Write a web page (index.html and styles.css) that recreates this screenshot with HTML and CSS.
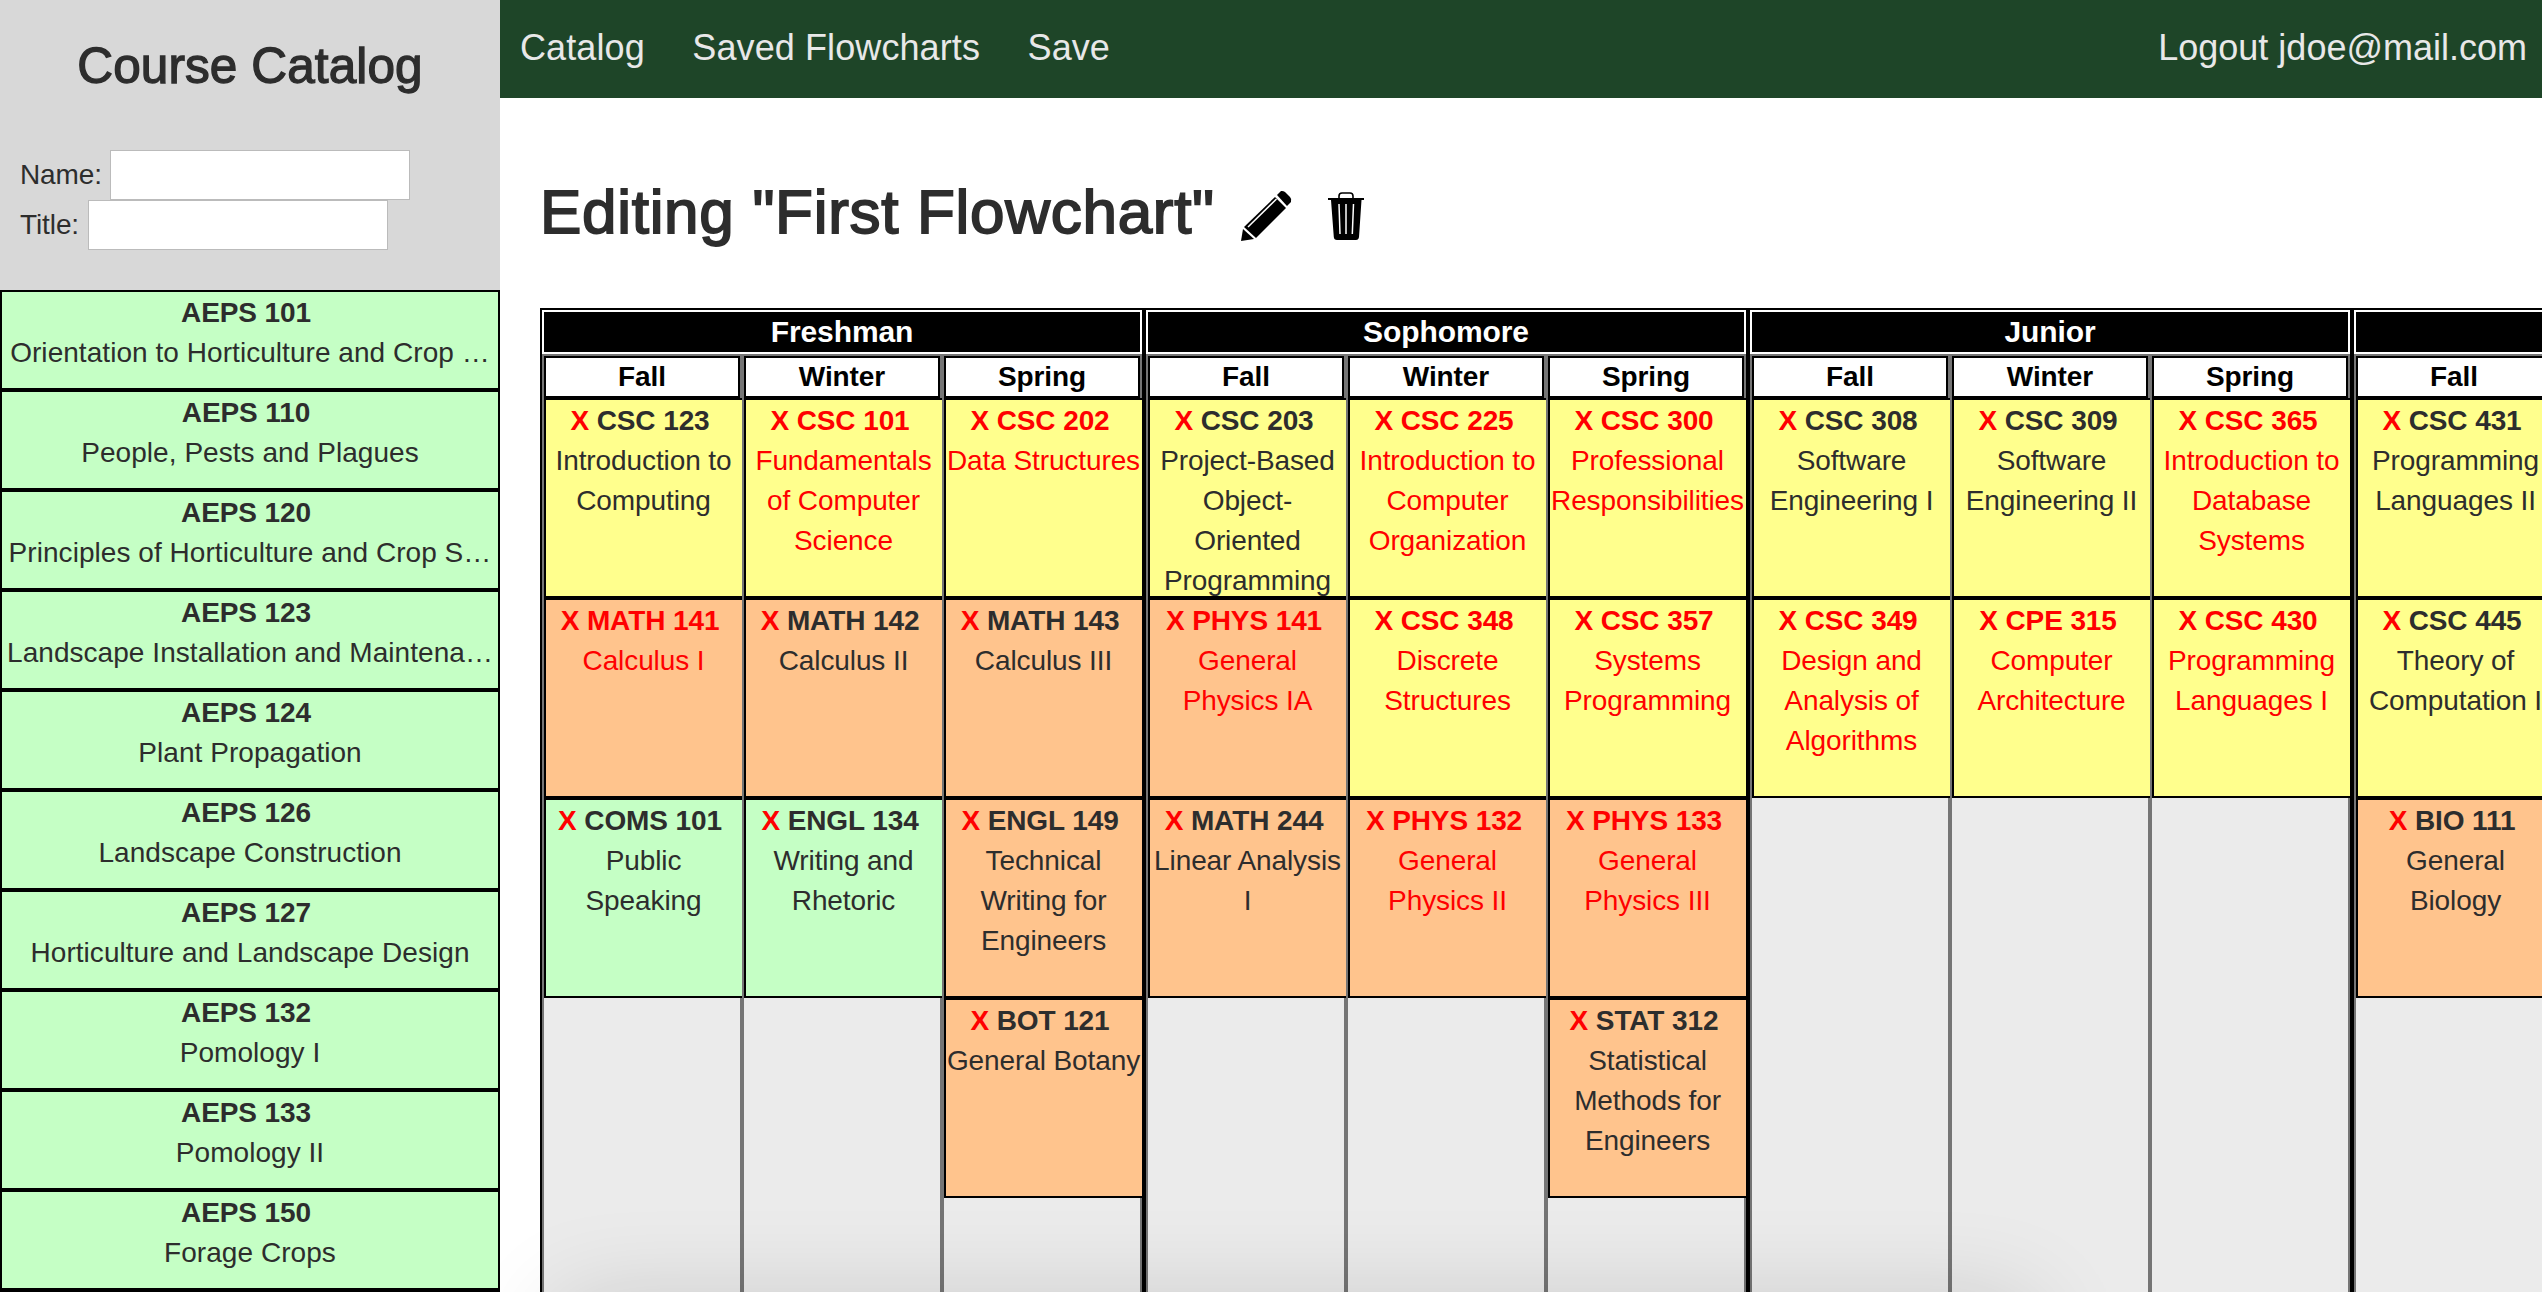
FILE: index.html
```html
<!DOCTYPE html>
<html lang="en">
<head>
<meta charset="utf-8">
<title>Flowchart Editor</title>
<link rel="stylesheet" href="styles.css">
</head>
<body>
<div class="app">
  <aside class="sidebar">
    <h2 class="sidebar-title">Course Catalog</h2>
    <form class="filters">
      <label class="filter name">Name: <input class="field" type="text"></label>
      <label class="filter">Title: <input class="field" type="text"></label>
    </form>
    <div class="catalog">
      <div class="entry"><b>AEPS 101</b><span>Orientation to Horticulture and Crop …</span></div>
      <div class="entry"><b>AEPS 110</b><span>People, Pests and Plagues</span></div>
      <div class="entry"><b>AEPS 120</b><span>Principles of Horticulture and Crop S…</span></div>
      <div class="entry"><b>AEPS 123</b><span>Landscape Installation and Maintena…</span></div>
      <div class="entry"><b>AEPS 124</b><span>Plant Propagation</span></div>
      <div class="entry"><b>AEPS 126</b><span>Landscape Construction</span></div>
      <div class="entry"><b>AEPS 127</b><span>Horticulture and Landscape Design</span></div>
      <div class="entry"><b>AEPS 132</b><span>Pomology I</span></div>
      <div class="entry"><b>AEPS 133</b><span>Pomology II</span></div>
      <div class="entry"><b>AEPS 150</b><span>Forage Crops</span></div>
      <div class="entry"></div>
    </div>
  </aside>
  <main class="main">
    <nav class="navbar">
      <a class="nav-link">Catalog</a>
      <a class="nav-link">Saved Flowcharts</a>
      <a class="nav-link">Save</a>
      <a class="nav-link logout">Logout jdoe@mail.com</a>
    </nav>
    <header class="heading">
      <h1 class="title">Editing "First Flowchart"</h1>
      <svg class="pencil" viewBox="0 0 50 50" width="50" height="50">
        <path d="M36 4 40 0Q42-.5 44 1L49 6Q51 8 50 11L46 15Z"/>
        <path d="M34 6 45 17 15 47 3 36Z"/>
        <path d="M2 38 13 48 0 50Z"/>
        <path d="M7 36 35.500 8" stroke="#fff" stroke-width="1.500" fill="none"/>
      </svg>
      <svg class="trash" viewBox="0 0 36 48" width="36" height="48">
        <path d="M11 7V4Q11 1 14 1H22Q25 1 25 4V7" fill="none" stroke="#000" stroke-width="1.600"/>
        <path d="M0 6H36V8H33.500L31 45Q30.600 48 28 48H9Q6 48 5.800 45L3 8H0Z"/>
        <path d="M11 12 12 42M18 12V42M25.500 12 24.300 42" stroke="#fff" stroke-width="1.500" fill="none"/>
      </svg>
    </header>
    <div class="chart">
      <section class="year">
        <h3 class="year-name">Freshman</h3>
        <div class="quarters">
          <div class="quarter"><h4 class="quarter-name">Fall</h4>
            <div class="course major"><b><i>X</i> CSC 123</b>Introduction to Computing</div>
            <div class="course support missing"><b><i>X</i> MATH 141</b>Calculus I</div>
            <div class="course general"><b><i>X</i> COMS 101</b>Public Speaking</div>
          </div>
          <div class="quarter"><h4 class="quarter-name">Winter</h4>
            <div class="course major missing"><b><i>X</i> CSC 101</b>Fundamentals of Computer Science</div>
            <div class="course support"><b><i>X</i> MATH 142</b>Calculus II</div>
            <div class="course general"><b><i>X</i> ENGL 134</b>Writing and Rhetoric</div>
          </div>
          <div class="quarter"><h4 class="quarter-name">Spring</h4>
            <div class="course major missing"><b><i>X</i> CSC 202</b>Data Structures</div>
            <div class="course support"><b><i>X</i> MATH 143</b>Calculus III</div>
            <div class="course support"><b><i>X</i> ENGL 149</b>Technical Writing for Engineers</div>
            <div class="course support"><b><i>X</i> BOT 121</b>General Botany</div>
          </div>
        </div>
      </section>
      <section class="year">
        <h3 class="year-name">Sophomore</h3>
        <div class="quarters">
          <div class="quarter"><h4 class="quarter-name">Fall</h4>
            <div class="course major"><b><i>X</i> CSC 203</b>Project-Based Object-Oriented Programming</div>
            <div class="course support missing"><b><i>X</i> PHYS 141</b>General Physics IA</div>
            <div class="course support"><b><i>X</i> MATH 244</b>Linear Analysis I</div>
          </div>
          <div class="quarter"><h4 class="quarter-name">Winter</h4>
            <div class="course major missing"><b><i>X</i> CSC 225</b>Introduction to Computer Organization</div>
            <div class="course major missing"><b><i>X</i> CSC 348</b>Discrete Structures</div>
            <div class="course support missing"><b><i>X</i> PHYS 132</b>General Physics II</div>
          </div>
          <div class="quarter"><h4 class="quarter-name">Spring</h4>
            <div class="course major missing"><b><i>X</i> CSC 300</b>Professional Responsibilities</div>
            <div class="course major missing"><b><i>X</i> CSC 357</b>Systems Programming</div>
            <div class="course support missing"><b><i>X</i> PHYS 133</b>General Physics III</div>
            <div class="course support"><b><i>X</i> STAT 312</b>Statistical Methods for Engineers</div>
          </div>
        </div>
      </section>
      <section class="year">
        <h3 class="year-name">Junior</h3>
        <div class="quarters">
          <div class="quarter"><h4 class="quarter-name">Fall</h4>
            <div class="course major"><b><i>X</i> CSC 308</b>Software Engineering I</div>
            <div class="course major missing"><b><i>X</i> CSC 349</b>Design and Analysis of Algorithms</div>
          </div>
          <div class="quarter"><h4 class="quarter-name">Winter</h4>
            <div class="course major"><b><i>X</i> CSC 309</b>Software Engineering II</div>
            <div class="course major missing"><b><i>X</i> CPE 315</b>Computer Architecture</div>
          </div>
          <div class="quarter"><h4 class="quarter-name">Spring</h4>
            <div class="course major missing"><b><i>X</i> CSC 365</b>Introduction to Database Systems</div>
            <div class="course major missing"><b><i>X</i> CSC 430</b>Programming Languages I</div>
          </div>
        </div>
      </section>
      <section class="year">
        <h3 class="year-name"></h3>
        <div class="quarters">
          <div class="quarter"><h4 class="quarter-name">Fall</h4>
            <div class="course major"><b><i>X</i> CSC 431</b>Programming Languages II</div>
            <div class="course major"><b><i>X</i> CSC 445</b>Theory of Computation I</div>
            <div class="course support"><b><i>X</i> BIO 111</b>General Biology</div>
          </div>
        </div>
      </section>
    </div>
    <div class="tray"></div>
  </main>
</div>
</body>
</html>
```

FILE: styles.css
```css
* { box-sizing: border-box; }

body {
  margin: 0;
  font: 28px/40px "Liberation Sans", Arial, sans-serif;
  letter-spacing: -0.1px;
  color: #2d2d2d;
  background: #fff;
}

h1, h2, h3, h4 { margin: 0; }

.app {
  display: flex;
  height: 1292px;
  overflow: hidden;
}

.sidebar {
  flex: none;
  width: 500px;
  background: #d8d8d8;
}

.sidebar-title {
  height: 150px;
  padding-top: 36px;
  font-size: 49.5px;
  font-weight: 400;
  line-height: 60px;
  letter-spacing: 0.1px;
  text-align: center;
  -webkit-text-stroke: 1.3px #2d2d2d;
}

.filters {
  height: 140px;
  padding-left: 20px;
}

.filter {
  display: flex;
  gap: 9px;
  height: 50px;
  line-height: 49px;
}

.filter.name { gap: 8px; }

.field {
  width: 300px;
  height: 50px;
  border: 1px solid #bbb;
  background: #fff;
}

.entry {
  height: 100px;
  padding-top: 1px;
  border: 2px solid #000;
  background: #c5ffc5;
  text-align: center;
}

.entry b {
  display: block;
  padding-right: 8px;
}

.entry span {
  display: block;
  letter-spacing: 0.05px;
  white-space: nowrap;
}

.main {
  position: relative;
  flex: 1;
  min-width: 0;
  overflow: hidden;
}

.navbar {
  display: flex;
  gap: 47.500px;
  height: 98px;
  padding: 18px 15px 0 20px;
  background: #1e4528;
  color: #e8e8e8;
  font-size: 36px;
  line-height: 60px;
  letter-spacing: 0.1px;
}

.logout {
  margin-left: auto;
  letter-spacing: 0;
}

.heading {
  display: flex;
  height: 210px;
  padding: 93px 0 0 40px;
}

.title {
  width: 701px;
  margin-top: -9px;
  font-size: 62px;
  font-weight: 400;
  line-height: 60px;
  letter-spacing: 0.7px;
  white-space: nowrap;
  -webkit-text-stroke: 1.8px #2d2d2d;
}

.pencil { overflow: visible; }
.trash { margin: 1px 0 0 37px; }

.chart {
  display: flex;
  height: 1000px;
  padding-left: 40px;
}

.year {
  display: flex;
  flex: none;
  flex-direction: column;
  width: 604px;
  border: 2px solid #000;
}

.year-name {
  height: 44px;
  border: 2px solid #fff;
  background: #000;
  color: #fff;
  font-size: 30px;
  line-height: 39px;
  text-align: center;
}

.quarters {
  display: flex;
  flex: 1;
}

.quarter {
  width: 200px;
  border: 2px solid #757575;
  background: #ebebeb;
}

.quarter-name {
  height: 42px;
  border: 2px solid #000;
  background: #fff;
  color: #000;
  font-size: 28px;
  line-height: 38px;
  text-align: center;
}

.course {
  width: 200px;
  height: 200px;
  padding: 1px 1px 0 0;
  border: 2px solid #000;
  text-align: center;
}

.course b {
  display: block;
  padding-right: 7px;
}

.course i {
  color: #f00;
  font-style: normal;
}

.major { background: #ffff8d; }
.support { background: #ffc48d; }
.general { background: #c5ffc5; }
.missing { color: #f00; }

.tray {
  position: absolute;
  top: 1305px;
  left: 60px;
  width: 1470px;
  height: 100px;
  box-shadow: 0 0 100px rgba(0, 0, 0, 0.16);
}
```
